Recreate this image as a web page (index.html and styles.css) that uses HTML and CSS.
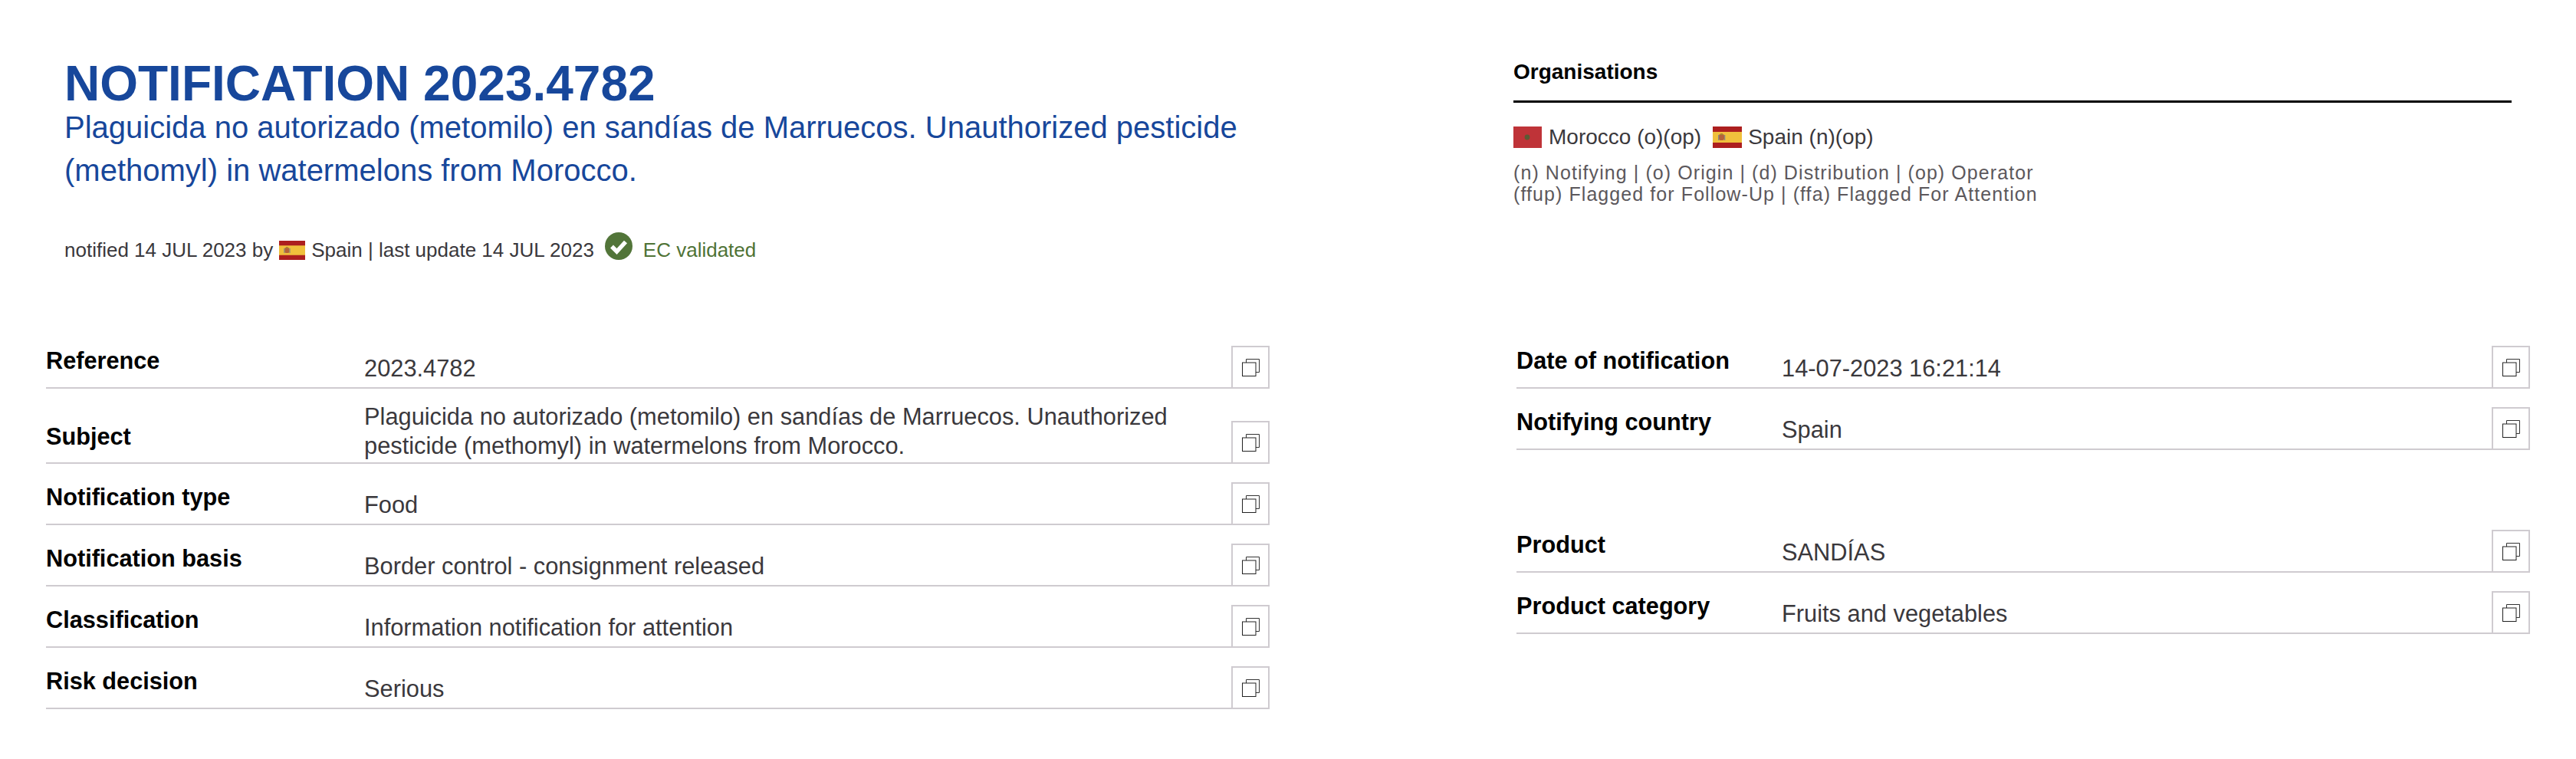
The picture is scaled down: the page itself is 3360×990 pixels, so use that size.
FILE: index.html
```html
<!DOCTYPE html>
<html lang="en">
<head>
<meta charset="utf-8">
<title>Notification 2023.4782</title>
<link rel="stylesheet" href="styles.css">
</head>
<body>
<svg class="defs" width="0" height="0" aria-hidden="true">
  <defs>
    <symbol id="flag-es" viewBox="0 0 38 28" preserveAspectRatio="none">
      <rect width="38" height="28" fill="#ad1f1f"/>
      <rect y="7" width="38" height="14" fill="#f0c03c"/>
      <rect x="8" y="10" width="7" height="8" rx="2" fill="#b5623a"/>
      <rect x="10" y="9" width="3" height="2" fill="#a88a30"/>
      <rect x="7" y="11" width="1.3" height="7" fill="#8a8a80"/>
      <rect x="15" y="11" width="1.3" height="7" fill="#8a8a80"/>
    </symbol>
    <symbol id="flag-ma" viewBox="0 0 37 28" preserveAspectRatio="none">
      <rect width="37" height="28" fill="#bf3338"/>
      <circle cx="18" cy="14" r="3.4" fill="#5c5a34"/>
    </symbol>
    <symbol id="copy" viewBox="0 0 23 23">
      <path d="M5.500 5V.5h17v17H18" fill="#fff" stroke="#333" stroke-width="1"/>
      <rect x=".5" y="5" width="17.500" height="17.500" fill="#fff" stroke="#222" stroke-width="1"/>
    </symbol>
  </defs>
</svg>
<main class="page">
  <header class="head">
    <h1 class="title">NOTIFICATION 2023.4782</h1>
    <p class="subtitle">Plaguicida no autorizado (metomilo) en sandías de Marruecos. Unauthorized pesticide (methomyl) in watermelons from Morocco.</p>
    <p class="meta">
      <span>notified 14 JUL 2023 by</span>
      <svg class="flag flag-small"><use href="#flag-es"/></svg>
      <span>Spain | last update 14 JUL 2023</span>
      <svg class="check" viewBox="0 0 36 36"><circle cx="18" cy="18" r="18" fill="#527539"/><path d="M9 18.500l6.500 6.500L27 12.500" fill="none" stroke="#fff" stroke-width="5.500"/></svg>
      <span class="valid">EC validated</span>
    </p>
  </header>
  <aside class="orgs">
    <h2 class="orgs-title">Organisations</h2>
    <p class="org-list">
      <svg class="flag flag-ma"><use href="#flag-ma"/></svg>
      <span class="org-name">Morocco (o)(op)</span>
      <svg class="flag flag-es"><use href="#flag-es"/></svg>
      <span>Spain (n)(op)</span>
    </p>
    <p class="legend">(n) Notifying | (o) Origin | (d) Distribution | (op) Operator<br>(ffup) Flagged for Follow-Up | (ffa) Flagged For Attention</p>
  </aside>
  <section class="table">
    <div class="row"><div class="label">Reference</div><div class="value">2023.4782</div><button class="copy"><svg><use href="#copy"/></svg></button></div>
    <div class="row row-tall"><div class="label label-mid">Subject</div><div class="value value-wrap">Plaguicida no autorizado (metomilo) en sandías de Marruecos. Unauthorized pesticide (methomyl) in watermelons from Morocco.</div><button class="copy"><svg><use href="#copy"/></svg></button></div>
    <div class="row"><div class="label">Notification type</div><div class="value">Food</div><button class="copy"><svg><use href="#copy"/></svg></button></div>
    <div class="row"><div class="label">Notification basis</div><div class="value">Border control - consignment released</div><button class="copy"><svg><use href="#copy"/></svg></button></div>
    <div class="row"><div class="label">Classification</div><div class="value">Information notification for attention</div><button class="copy"><svg><use href="#copy"/></svg></button></div>
    <div class="row"><div class="label">Risk decision</div><div class="value">Serious</div><button class="copy"><svg><use href="#copy"/></svg></button></div>
  </section>
  <section class="table table-right">
    <div class="row"><div class="label">Date of notification</div><div class="value">14-07-2023 16:21:14</div><button class="copy"><svg><use href="#copy"/></svg></button></div>
    <div class="row"><div class="label">Notifying country</div><div class="value">Spain</div><button class="copy"><svg><use href="#copy"/></svg></button></div>
    <div class="row row-gap"><div class="label">Product</div><div class="value">SANDÍAS</div><button class="copy"><svg><use href="#copy"/></svg></button></div>
    <div class="row"><div class="label">Product category</div><div class="value">Fruits and vegetables</div><button class="copy"><svg><use href="#copy"/></svg></button></div>
  </section>
</main>
</body>
</html>
```
FILE: styles.css
```css
* { box-sizing: border-box; }
html, body { margin: 0; padding: 0; background: #fff; }
body { font-family: "Liberation Sans", Arial, sans-serif; color: #3a383c; height: 990px; overflow: hidden; }
.defs { position: absolute; }
.page {
  display: grid;
  grid-template-columns: 1596px 1322px;
  column-gap: 322px;
  grid-template-rows: 427px auto;
  padding: 0 60px;
}
.head { padding: 80px 0 0 24px; }
.title { margin: 0; font-size: 64px; line-height: 58px; font-weight: 700; color: #17479b; }
.subtitle { margin: 0; max-width: 1560px; font-size: 40px; line-height: 56px; color: #17479b; }
.meta { display: flex; align-items: center; margin: 59px 0 0; font-size: 26px; line-height: 34px; }
.flag { display: block; height: 28px; }
.flag-small { width: 34px; height: 25px; margin: 0 8px; }
.check { width: 36px; height: 36px; margin: -10px 14px 0 14px; }
.valid { color: #4f7336; }
.orgs { padding: 76px 0 0; margin-left: -4px; margin-right: 24px; }
.orgs-title { margin: 0; padding-bottom: 20px; font-size: 28px; line-height: 35px; font-weight: 700; color: #000; border-bottom: 3px solid #000; }
.org-list { display: flex; align-items: center; margin: 28px 0 0; font-size: 28px; line-height: 34px; }
.flag-ma { width: 37px; margin-right: 9px; }
.flag-es { width: 38px; margin: 0 8px 0 15px; }
.legend { margin: 15px 0 0; font-size: 25px; line-height: 28px; letter-spacing: 1.08px; color: #5c585c; }
.table { display: flex; flex-direction: column; }
.row { position: relative; display: flex; align-items: flex-end; height: 80px; border-bottom: 2px solid #cfcbd0; }
.row-tall { height: 98px; }
.row-gap { margin-top: 80px; }
.label { width: 415px; padding-bottom: 16px; font-size: 30.700px; line-height: 36px; font-weight: 700; color: #000; }
.label-mid { padding-bottom: 15px; }
.value { width: 1060px; padding-bottom: 6px; font-size: 30.800px; line-height: 36px; color: #3a383c; }
.value-wrap { padding-bottom: 2px; line-height: 38px; }
.table-right .label { width: 346px; }
.table-right .value { width: 920px; }
.copy { display: flex; align-items: center; justify-content: center; margin-left: auto; margin-bottom: -2px; width: 50px; height: 56px; padding: 0; background: #fff; border: 2px solid #cfcbd0; }
.copy svg { width: 23px; height: 23px; }
```
